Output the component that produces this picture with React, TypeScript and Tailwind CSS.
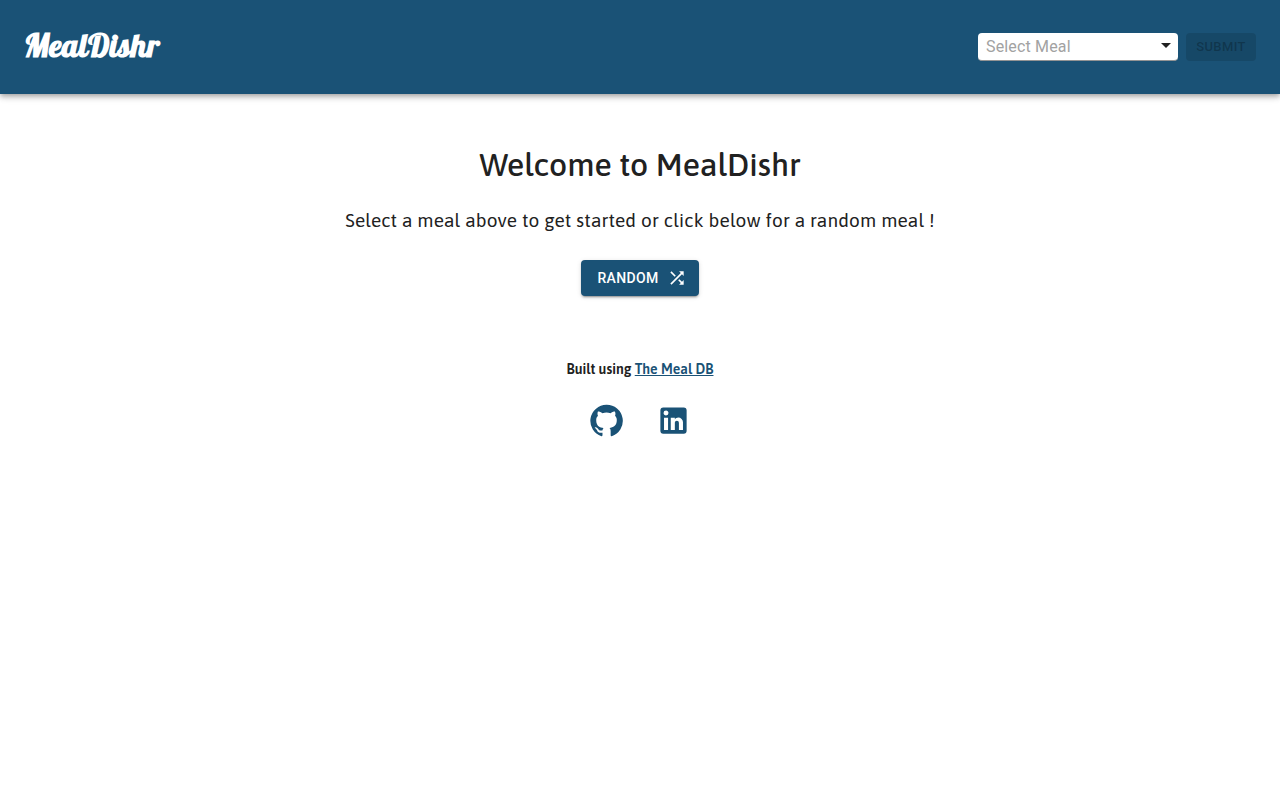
import { useState } from "react";
import { MdArrowDropDown } from "react-icons/md";

const MEALS = ["Beef", "Chicken", "Dessert", "Lamb", "Pasta", "Seafood", "Vegetarian"];

function ShuffleIcon() {
  return (
    <svg viewBox="0 0 24 24" className="size-5" fill="currentColor" aria-hidden="true">
      <path d="M10.59 9.17 5.41 4 4 5.41l5.17 5.17 1.42-1.41zM14.5 4l2.04 2.04L4 18.59 5.41 20 17.96 7.46 20 9.5V4h-5.5zm.33 9.41-1.41 1.41 3.13 3.13L14.5 20H20v-5.5l-2.04 2.04-3.13-3.13z" />
    </svg>
  );
}

function GitHubIcon() {
  return (
    <svg viewBox="0 0 24 24" className="size-[35px]" fill="currentColor" aria-hidden="true">
      <path d="M12 1.27a11 11 0 00-3.48 21.46c.55.09.73-.28.73-.55v-1.84c-3.03.64-3.67-1.46-3.67-1.46-.55-1.29-1.28-1.65-1.28-1.65-.92-.65.1-.65.1-.65 1.1 0 1.73 1.1 1.73 1.1.92 1.65 2.57 1.2 3.21.92a2 2 0 01.64-1.47c-2.47-.27-5.04-1.19-5.04-5.5 0-1.1.46-2.1 1.2-2.84a3.76 3.76 0 010-2.93s.91-.28 3.11 1.1c1.8-.49 3.7-.49 5.5 0 2.1-1.38 3.02-1.1 3.02-1.1a3.76 3.76 0 01.1 2.93c.83.74 1.2 1.74 1.2 2.94 0 4.21-2.57 5.13-5.04 5.4.45.37.82.92.82 2.02v3.03c0 .27.1.64.73.55A11 11 0 0012 1.27" />
    </svg>
  );
}

function LinkedInIcon() {
  return (
    <svg viewBox="0 0 24 24" className="size-[35px]" fill="currentColor" aria-hidden="true">
      <path d="M19 3a2 2 0 0 1 2 2v14a2 2 0 0 1-2 2H5a2 2 0 0 1-2-2V5a2 2 0 0 1 2-2h14m-.5 15.5v-5.3a3.26 3.26 0 0 0-3.26-3.26c-.85 0-1.84.52-2.32 1.3v-1.11h-2.79v8.37h2.79v-4.93c0-.77.62-1.4 1.39-1.4a1.4 1.4 0 0 1 1.4 1.4v4.93h2.79M6.88 8.56a1.68 1.68 0 0 0 1.68-1.68c0-.93-.75-1.69-1.68-1.69a1.69 1.69 0 0 0-1.69 1.69c0 .93.76 1.68 1.69 1.68m1.39 9.94v-8.37H5.5v8.37h2.77z" />
    </svg>
  );
}

function Header() {
  const [meal, setMeal] = useState("");
  return (
    <header className="flex items-center justify-between bg-[#1a5276] px-6 pt-6 pb-6 shadow-[0_2px_4px_-1px_rgba(0,0,0,0.2),0_4px_5px_0_rgba(0,0,0,0.14),0_1px_10px_0_rgba(0,0,0,0.12)]">
      <h1 className="font-['Lobster','Liberation_Serif',serif] pb-1 text-[32px] leading-[42px] font-bold tracking-[0.01em] text-white">
        MealDishr
      </h1>
      <form className="flex items-center gap-2 py-[9px]" onSubmit={(e) => e.preventDefault()}>
        <div className="relative">
          <select
            aria-label="Select Meal"
            value={meal}
            onChange={(e) => setMeal(e.target.value)}
            className="block h-7 w-50 appearance-none rounded border-b border-[#949494] bg-white pr-8 pl-2 text-base leading-6 tracking-[0.01em] text-[#a2a2a2]"
          >
            <option value="">Select Meal</option>
            {MEALS.map((name) => (
              <option key={name}>{name}</option>
            ))}
          </select>
          <MdArrowDropDown className="pointer-events-none absolute top-0 right-0 size-6 text-[#212121]" aria-hidden="true" />
        </div>
        <button
          type="submit"
          disabled={!meal}
          className="h-7 w-[70px] rounded bg-black/12 text-[13px] font-medium tracking-[0.03em] text-black/26 uppercase"
        >
          Submit
        </button>
      </form>
    </header>
  );
}

export default function App() {
  return (
    <div className="min-h-screen bg-white font-[Roboto,sans-serif] text-[#212121]">
      <Header />
      <main className="flex flex-col items-center px-6 pt-12 text-center">
        <h2 className="font-['Asap','Noto_Sans',sans-serif] text-[32px] leading-[46px] font-medium">Welcome to MealDishr</h2>
        <p className="mt-4 font-['Asap','Noto_Sans',sans-serif] text-[19px] leading-8 tracking-[0.01em]">
          Select a meal above to get started or click below for a random meal !
        </p>
        <button
          type="button"
          className="mt-6 flex h-9 items-center gap-2 rounded bg-[#1a5276] pr-3 pl-4 text-sm font-medium tracking-wide text-white uppercase shadow-[0_3px_1px_-2px_rgba(0,0,0,0.2),0_2px_2px_0_rgba(0,0,0,0.14),0_1px_5px_0_rgba(0,0,0,0.12)]"
        >
          Random
          <ShuffleIcon />
        </button>
      </main>
      <footer className="mt-16 flex flex-col items-center pb-8">
        <p className="font-['Asap','Noto_Sans',sans-serif] text-sm leading-[19px] font-semibold">
          Built using{" "}
          <a href="https://www.themealdb.com" className="text-[#1a5276] underline">
            The Meal DB
          </a>
        </p>
        <div className="mt-6 flex gap-8 text-[#1a5276]">
          <a href="https://github.com" aria-label="GitHub">
            <GitHubIcon />
          </a>
          <a href="https://www.linkedin.com" aria-label="LinkedIn">
            <LinkedInIcon />
          </a>
        </div>
      </footer>
    </div>
  );
}
